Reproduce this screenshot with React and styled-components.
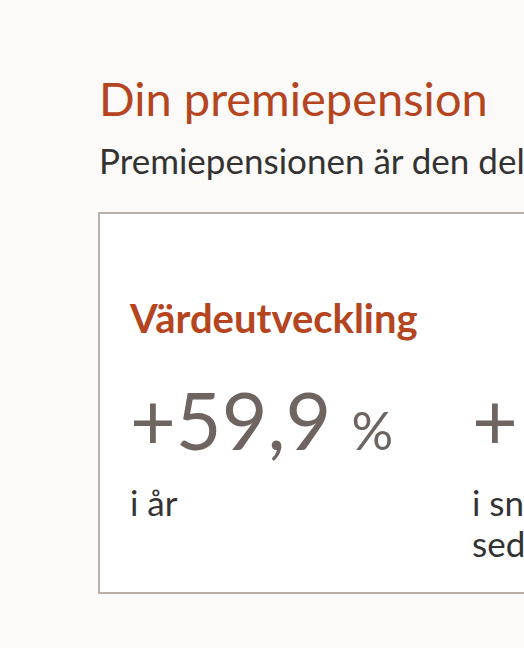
import React from "react";
import styled, { createGlobalStyle } from "styled-components";

const Global = createGlobalStyle`
  html, body {
    margin: 0;
    padding: 0;
    overflow: hidden;
    background: #fcfaf8;
  }
  body {
    font-family: Lato, "Open Sans", sans-serif;
  }
`;

export default function App() {
  return (
    <Page>
      <Global />
      <Title>Din premiepension</Title>
      <Lead>Premiepensionen är den del av din allmänna pension som du själv kan placera</Lead>
      <Card>
        <CardTitle>Värdeutveckling</CardTitle>
        <Stats>
          <Stat>
            <Value>
              +59,9 <Unit>%</Unit>
            </Value>
            <Label>i år</Label>
          </Stat>
          <Stat>
            <Value>
              +11,4 <Unit>%</Unit>
            </Value>
            <Label>i snitt per år sedan start</Label>
          </Stat>
        </Stats>
      </Card>
    </Page>
  );
}

const Page = styled.main`
  padding: 70px 0 0 99px;
  width: 900px;
`;

const Title = styled.h1`
  margin: 0;
  font-weight: 400;
  font-size: 47px;
  line-height: 56px;
  color: #b5451f;
`;

const Lead = styled.p`
  margin: 13px 0 0;
  font-size: 35px;
  line-height: 42px;
  letter-spacing: 0;
  color: #333333;
  white-space: nowrap;
`;

const Card = styled.section`
  margin: 31px 0 0 -1px;
  background: #ffffff;
  border: 2px solid #b9b1a9;
  padding: 80px 30px 28px;
  width: 700px;
`;

const CardTitle = styled.h2`
  margin: 0;
  font-size: 40px;
  line-height: 48px;
  font-weight: 700;
  color: #b5451f;
`;

const Stats = styled.div`
  display: grid;
  grid-template-columns: 342px 342px;
  margin-top: 38px;
`;

const Stat = styled.div`
  display: flex;
  flex-direction: column;
`;

const Value = styled.div`
  font-size: 79px;
  line-height: 80px;
  color: #6f6560;
  white-space: nowrap;
`;

const Unit = styled.span`
  font-size: 52px;
`;

const Label = styled.div`
  margin-top: 12px;
  font-size: 35px;
  line-height: 41px;
  color: #333333;
  max-width: 230px;
`;
